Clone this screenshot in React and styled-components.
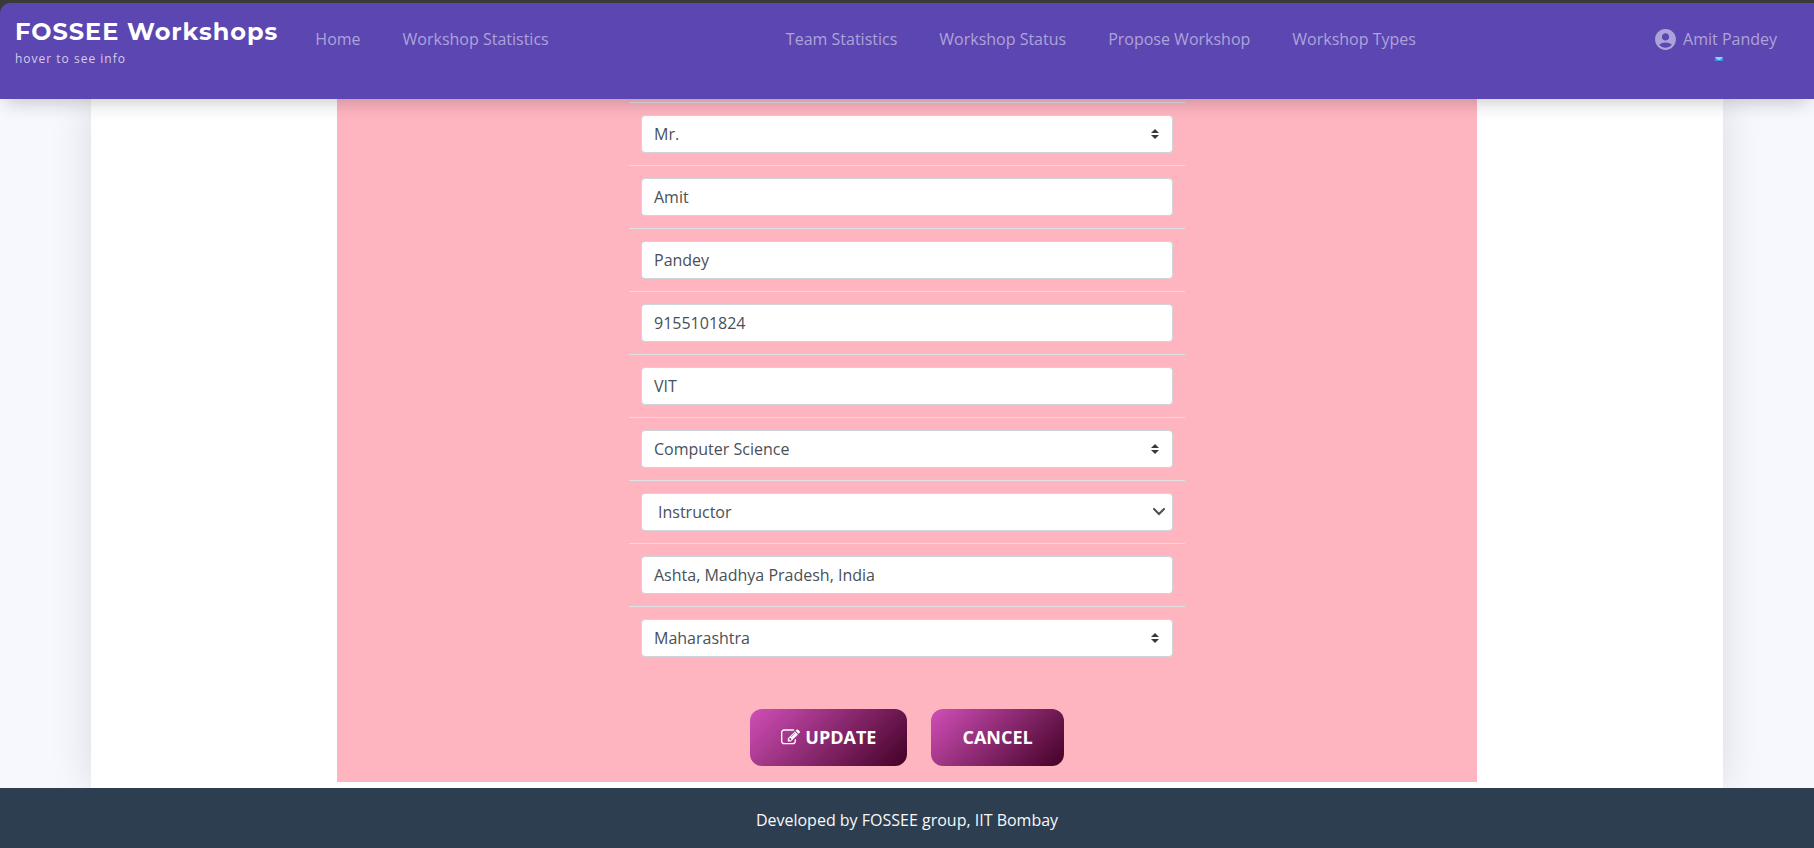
import React from 'react';
import styled, { createGlobalStyle } from 'styled-components';
import { MdAccountCircle } from 'react-icons/md';

const GlobalStyle = createGlobalStyle`
  *, *::before, *::after { box-sizing: border-box; }
  body {
    margin: 0;
    background: #f7f8fd;
    font-family: "Open Sans", "Noto Sans", sans-serif;
    font-size: 16px;
    line-height: 24px;
    color: #212529;
  }
`;

const Page = styled.div`
  display: flex;
  flex-direction: column;
  min-height: 100vh;
`;

const TopEdge = styled.div`
  position: sticky;
  top: 0;
  z-index: 10;
  padding-top: 3px;
  background: linear-gradient(#3b3b3b 16px, transparent 16px);
`;

const Header = styled.header`
  display: flex;
  align-items: flex-start;
  justify-content: space-between;
  height: 96px;
  padding: 12px 16px 0 15px;
  border-top-left-radius: 10px;
  background: #5c46b2;
  box-shadow: 0 8px 20px -6px rgba(0, 0, 0, 0.24);
`;

const Start = styled.div`
  display: flex;
  gap: 16px;
`;

const Brand = styled.a`
  display: flex;
  flex-direction: column;
  color: #fff;
  text-decoration: none;
  font: 700 24px/34px Montserrat, "DejaVu Sans", sans-serif;
  letter-spacing: 1px;
`;

const Hint = styled.span`
  font: 400 12px/20px "Open Sans", sans-serif;
  color: #d3cdea;
`;

const NavList = styled.nav`
  display: flex;
`;

const NavLink = styled.a`
  display: flex;
  align-items: center;
  gap: 5px;
  height: 24px;
  margin-top: 12px;
  padding: 0 21px;
  color: #aea3d9;
  text-decoration: none;
  white-space: nowrap;
`;

const Account = styled.div`
  position: relative;
`;

const Badge = styled.svg`
  position: absolute;
  top: 42px;
  left: 50%;
  width: 8px;
  height: 4px;
`;

const Main = styled.main`
  flex: 1;
  width: 90%;
  margin: 0 auto;
  padding-bottom: 6px;
  background: #fff;
  box-shadow: 0 0 40px rgba(0, 0, 0, 0.12);
`;

const Panel = styled.form`
  display: flex;
  flex-direction: column;
  align-items: center;
  max-width: 1140px;
  margin: 0 auto;
  padding: 3px 0 16px;
  background: #ffb5c0;
`;

const Fields = styled.div`
  width: 100%;
  max-width: 556px;
`;

const Row = styled.div`
  padding: 12px;
  border-top: 1px solid #dee2e6;
`;

const Field = styled.div`
  position: relative;
  display: flex;
  align-items: center;
`;

const Input = styled.input`
  width: 100%;
  height: 38px;
  padding: 6px 12px;
  border: 1px solid #ced4da;
  border-radius: 4px;
  background: #fff;
  color: #495057;
  font: inherit;
`;

const Select = styled(Input).attrs({ as: 'select' })`
  appearance: none;
  padding-left: ${(p) => (p.$indented ? '16px' : '12px')};
`;

const Sorter = styled.svg`
  position: absolute;
  right: 14px;
  width: 8px;
  height: 10px;
  fill: #343a40;
  pointer-events: none;
`;

const Chevron = styled.svg`
  position: absolute;
  right: 7px;
  width: 14px;
  height: 8px;
  fill: none;
  stroke: #495057;
  stroke-width: 2;
  pointer-events: none;
`;

const Actions = styled.div`
  display: flex;
  gap: 24px;
  margin-top: 40px;
`;

const Button = styled.button`
  display: flex;
  align-items: center;
  gap: 5px;
  height: 57px;
  padding: 0 31px;
  border: 0;
  border-radius: 12px;
  background: linear-gradient(135deg, #d04fb7, #430126);
  color: #fff;
  font: 700 18px/27px "Open Sans", sans-serif;
  text-transform: uppercase;
`;

const Footer = styled.footer`
  position: relative;
  padding: 20px 0 16px;
  background: #2d3e50;
  color: #f8f9fa;
  text-align: center;
`;

const EditIcon = () => (
  <svg width="19" height="19" viewBox="0 0 1792 1792" fill="currentColor" aria-hidden="true">
    <path d="M888 1184l116-116-152-152-116 116v56h96v96h56zm440-720q-16-16-33 1l-350 350q-17 17-1 33t33-1l350-350q17-17 1-33zm80 594v190q0 119-84.5 203.5t-203.5 84.5h-832q-119 0-203.5-84.5t-84.5-203.5v-832q0-119 84.5-203.5t203.5-84.5h832q63 0 117 25 15 7 18 23 3 17-9 29l-49 49q-14 14-32 8-23-6-45-6h-832q-66 0-113 47t-47 113v832q0 66 47 113t113 47h832q66 0 113-47t47-113v-126q0-13 9-22l64-64q15-15 35-7t20 29zm-96-738l288 288-672 672h-288v-288zm444 132l-92 92-288-288 92-92q28-28 68-28t68 28l152 152q28 28 28 68t-28 68z" />
  </svg>
);

const fields = [
  { label: 'Title', value: 'Mr.', kind: 'sorter' },
  { label: 'First name', value: 'Amit' },
  { label: 'Last name', value: 'Pandey' },
  { label: 'Phone number', value: '9155101824' },
  { label: 'Institute', value: 'VIT' },
  { label: 'Department', value: 'Computer Science', kind: 'sorter' },
  { label: 'Position', value: 'Instructor', kind: 'chevron' },
  { label: 'Location', value: 'Ashta, Madhya Pradesh, India' },
  { label: 'State', value: 'Maharashtra', kind: 'sorter' },
];

function FormRow({ label, value, kind }) {
  return (
    <Row>
      <Field>
        {kind ? (
          <Select aria-label={label} defaultValue={value} $indented={kind === 'chevron'}>
            <option>{value}</option>
          </Select>
        ) : (
          <Input aria-label={label} type="text" defaultValue={value} />
        )}
        {kind === 'sorter' && (
          <Sorter viewBox="0 0 4 5" aria-hidden="true">
            <path d="M2 0L0 2h4zm0 5L0 3h4z" />
          </Sorter>
        )}
        {kind === 'chevron' && (
          <Chevron viewBox="0 0 14 8" aria-hidden="true">
            <path d="M2 1l5 5 5-5" strokeLinecap="round" />
          </Chevron>
        )}
      </Field>
    </Row>
  );
}

export default function App() {
  return (
    <Page>
      <GlobalStyle />
      <TopEdge>
        <Header>
          <Start>
            <Brand href="#">
              FOSSEE Workshops
              <Hint>hover to see info</Hint>
            </Brand>
            <NavList>
              <NavLink href="#">Home</NavLink>
              <NavLink href="#">Workshop Statistics</NavLink>
            </NavList>
          </Start>
          <NavList>
            <NavLink href="#">Team Statistics</NavLink>
            <NavLink href="#">Workshop Status</NavLink>
            <NavLink href="#">Propose Workshop</NavLink>
            <NavLink href="#">Workshop Types</NavLink>
          </NavList>
          <Account>
            <NavLink href="#">
              <MdAccountCircle size={25} aria-hidden="true" />
              Amit Pandey
            </NavLink>
            <Badge viewBox="0 0 8 4" aria-hidden="true">
              <path d="M0 0h8v4H0z" fill="#3496dc" />
              <path d="M0 0h8L5 3H3z" fill="#9fd0f3" />
            </Badge>
          </Account>
        </Header>
      </TopEdge>
      <Main>
        <Panel>
          <Fields>
            {fields.map((f) => (
              <FormRow key={f.label} {...f} />
            ))}
          </Fields>
          <Actions>
            <Button type="button">
              <EditIcon />
              Update
            </Button>
            <Button type="button">Cancel</Button>
          </Actions>
        </Panel>
      </Main>
      <Footer>Developed by FOSSEE group, IIT Bombay</Footer>
    </Page>
  );
}
